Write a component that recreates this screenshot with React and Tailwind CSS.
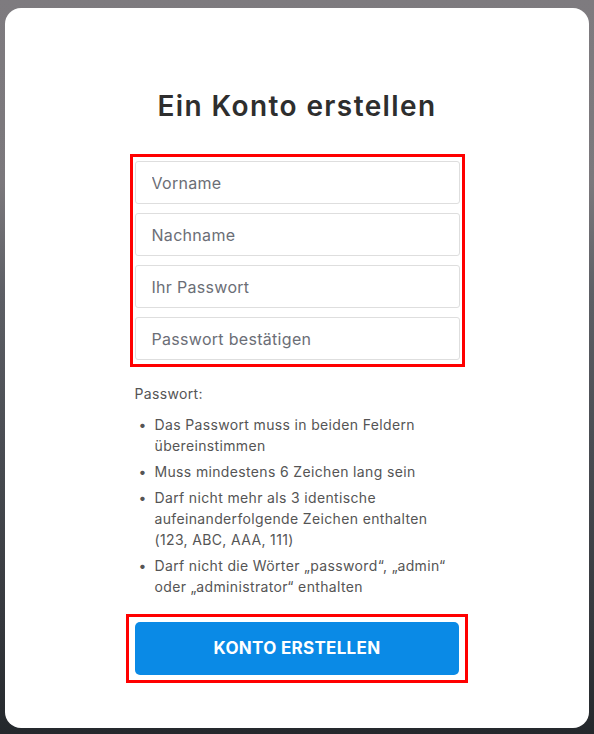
export default function App() {
  const rules = [
    "Das Passwort muss in beiden Feldern übereinstimmen",
    "Muss mindestens 6 Zeichen lang sein",
    "Darf nicht mehr als 3 identische aufeinanderfolgende Zeichen enthalten (123, ABC, AAA, 111)",
    "Darf nicht die Wörter „password“, „admin“ oder „administrator“ enthalten",
  ];

  return (
    <div
      className="min-h-screen w-full px-[5px] pt-[8px] pb-[6px] bg-[linear-gradient(180deg,#7e7b7f_0%,#7b787c_25%,#5d5f65_40%,#4a4d53_60%,#35383d_85%,#24282c_100%)]"
      style={{ fontFamily: "Inter, 'Open Sans', sans-serif" }}
    >
      <div className="w-[584px] h-[720px] bg-white rounded-2xl flex flex-col items-center pt-[80px]">
        {/* Title */}
        <h1 className="text-[28px] leading-[36px] font-semibold text-[#2e2e2e] tracking-[1.4px]">
          Ein Konto erstellen
        </h1>

        {/* Inputs (highlighted) */}
        <div className="mt-[30px] w-[335px] border-[3px] border-[#ff0000] px-[2px] py-[4px] flex flex-col gap-[9px]">
          {["Vorname", "Nachname", "Ihr Passwort", "Passwort bestätigen"].map((p, i) => (
            <input
              key={p}
              type={i > 1 ? "password" : "text"}
              placeholder={p}
              className="w-full h-[43px] px-[16px] rounded-[3px] border border-[#dedede] text-[16px] tracking-[0.3px] text-[#333] placeholder-[#6b6e76] focus:outline-none"
            />
          ))}
        </div>

        {/* Password rules */}
        <div className="w-[325px] mt-[17px] text-[14px] tracking-[0.35px] text-[#555]">
          <p className="leading-[20px]">Passwort:</p>
          <ul className="mt-[10px] flex flex-col gap-[5px]">
            {rules.map((r) => (
              <li key={r} className="flex leading-[21px]">
                <span className="w-[20px] shrink-0 pl-[4px]">•</span>
                <span className="pr-[8px]">{r}</span>
              </li>
            ))}
          </ul>
        </div>

        {/* Submit (highlighted) */}
        <div className="mt-[17px] w-[342px] border-[3px] border-[#ff0000] px-[6px] py-[5px]">
          <button className="w-full h-[53px] rounded-[5px] bg-[#0a8ae6] text-white text-[17px] font-bold tracking-[0.3px]">
            KONTO ERSTELLEN
          </button>
        </div>
      </div>
    </div>
  );
}
